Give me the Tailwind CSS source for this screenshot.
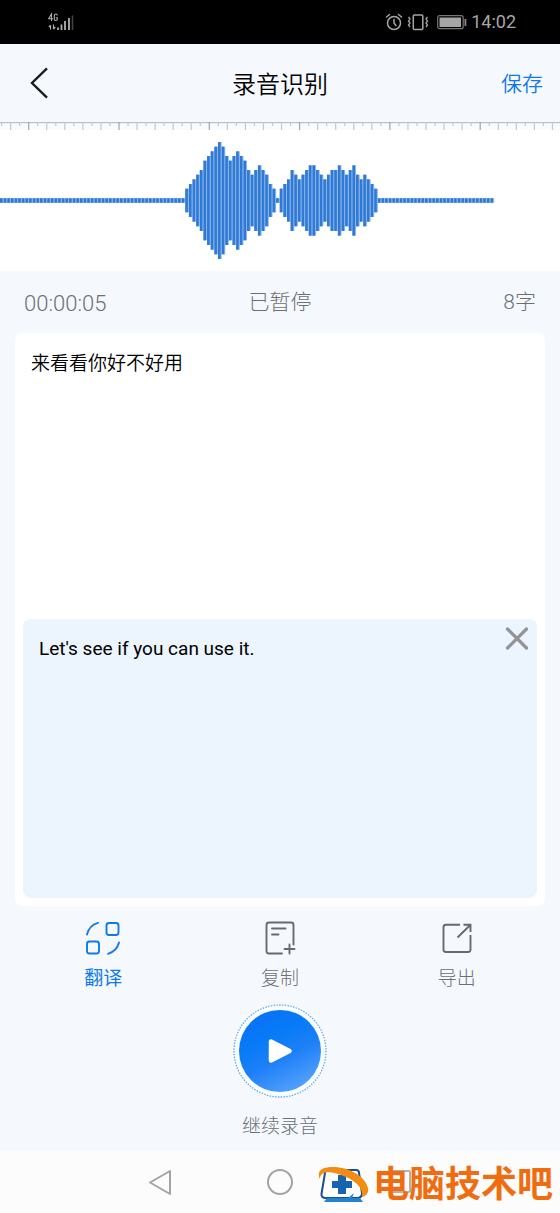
<!DOCTYPE html>
<html lang="zh-CN">
<head>
<meta charset="utf-8">
<meta name="viewport" content="width=device-width, initial-scale=1">
<title>录音识别</title>
<script src="https://cdn.jsdelivr.net/npm/@tailwindcss/browser@4"></script>
</head>
<body class="flex min-h-screen flex-col bg-[#f5f9fe] font-[Roboto,'Noto_Sans_CJK_SC',sans-serif] text-black">

<div class="flex h-11 items-center justify-between bg-black pr-11 pl-12 text-[#a6a6a6]">
  <svg class="h-5 w-7" viewBox="0 0 28 20" fill="none" stroke="#b0b0b0" aria-label="4G">
    <path d="M3.5 9V2L.6 6.7H5M9.3 3.6C9.300 1.500 6.300 1.500 6.300 3.600V6.900C6.300 9 9.300 9 9.300 6.900V5.700H7.800" stroke-width="1.100"/>
    <path d="M2.500 17.500V13.500M1 15L2.500 13.200M5.500 12.500V17M7.300 15L5.500 17.200" stroke-width="1.200"/>
    <path d="M10 18V15.500M13.500 18V12.500M17 18V9M21 18V6" stroke-width="1.800"/>
    <path d="M24.500 18V3.500" stroke="#444" stroke-width="1.500"/>
  </svg>
  <div class="flex items-center gap-1">
    <svg class="h-5 w-[18px]" viewBox="0 0 18 20" fill="none" stroke="currentColor" stroke-width="1.500" stroke-linecap="round">
      <circle cx="9" cy="11" r="6.500"/><path d="M9 7.500V11L11 13.500M1.500 5L4.500 2.500M16.500 5L13.500 2.500"/>
    </svg>
    <svg class="h-5 w-[22px]" viewBox="0 0 22 20" fill="none" stroke="currentColor" stroke-width="1.500">
      <rect x="6.300" y="3" width="9.500" height="14.500" rx="1"/>
      <path d="M1.500 5L3 7L1.500 9L3 11L1.500 13L3 15M20.500 5L19 7L20.500 9L19 11L20.500 13L19 15" stroke-width="1.300"/>
    </svg>
    <svg class="ml-1 h-5 w-[30px]" viewBox="0 0 30 20" fill="none">
      <rect x=".7" y="3.700" width="25.500" height="13" rx="2" stroke="#777" stroke-width="1.200"/>
      <rect x="2.500" y="5.500" width="21.500" height="9.500" fill="#a6a6a6"/>
      <rect x="27.500" y="7" width="1.800" height="7" fill="#888"/>
    </svg>
    <span class="text-lg">14:02</span>
  </div>
</div>

<header class="grid h-[78px] grid-cols-3 items-center px-[17px]">
  <button aria-label="返回" class="justify-self-start px-3">
    <svg class="h-8 w-5" viewBox="0 0 20 32" fill="none" stroke="#1c1c1c" stroke-width="2.400"><path d="M18 1.300L3 16L18 30.700"/></svg>
  </button>
  <h1 class="justify-self-center pt-1 text-2xl font-[350] whitespace-nowrap">录音识别</h1>
  <button class="justify-self-end pt-1 text-[21px] font-[350] text-[#0f7ae5]">保存</button>
</header>

<section class="flex flex-col bg-white" aria-label="波形">
  <svg id="ruler" class="h-2 w-full bg-[#f9fbfe]"></svg>
  <svg id="wave" class="h-[141px] w-full"></svg>
</section>

<div class="grid h-[62px] grid-cols-3 items-center px-6 pt-[2px] text-[21px] font-light text-[#6c7075]">
  <span class="text-[22px] text-[#6c7075]">00:00:05</span>
  <span class="text-center">已暂停</span>
  <span class="text-right">8字</span>
</div>

<main class="mx-[15px] flex flex-1 flex-col rounded-lg bg-white p-2">
  <textarea aria-label="识别文字" class="min-h-0 flex-1 resize-none px-2 pt-[9px] text-[19px] leading-7 font-[350] outline-none">来看看你好不好用</textarea>
  <div class="flex h-[279px] items-start rounded-lg bg-[#ecf4fe]">
    <textarea aria-label="译文" class="h-full flex-1 resize-none px-4 pt-4 text-[19px] leading-7 outline-none">Let's see if you can use it.</textarea>
    <button aria-label="关闭" class="p-2">
      <svg class="size-6" viewBox="0 0 24 24" stroke="#929496" stroke-width="3.200" stroke-linecap="round"><path d="M2.500 2L21.500 21M21.500 2L2.500 21"/></svg>
    </button>
  </div>
</main>

<div class="mx-[15px] grid grid-cols-3 pt-3 text-[19px] leading-7 font-light text-[#6c7075]">
  <button class="flex flex-col items-center gap-[7px] text-[#0f7ae5]">
    <svg class="h-10 w-9" viewBox="0 0 36 40" fill="none" stroke="currentColor" stroke-width="1.900" stroke-linecap="round">
      <rect x="21.500" y="5" width="12" height="12" rx="2.500"/><rect x="2" y="23.500" width="12" height="12" rx="2.500"/>
      <path d="M2 16.500C3.500 10 7 6.500 13 4.800M34 24.500C32.500 30.500 29 34 23 35.800"/>
    </svg>
    <span class="font-normal">翻译</span>
  </button>
  <button class="flex flex-col items-center gap-[7px]">
    <svg class="h-10 w-9" viewBox="0 0 36 40" fill="none" stroke="#66696d" stroke-width="1.900" stroke-linecap="round">
      <path d="M20 35.500H7Q4.500 35.500 4.500 33V7Q4.500 4.500 7 4.500H29Q31.500 4.500 31.500 7V26.500M10 10.500H23.500M10 16.500H16.500M27.500 26.500V35.500M22.500 31H32.500"/>
    </svg>
    <span>复制</span>
  </button>
  <button class="flex flex-col items-center gap-[7px]">
    <svg class="h-10 w-9" viewBox="0 0 36 40" fill="none" stroke="#66696d" stroke-width="1.900">
      <path d="M21 6.700H7Q4.500 6.700 4.500 9.200V31.500Q4.500 34 7 34H29Q31.500 34 31.500 31.500V17M24.500 6.700H31.500V14M31.500 6.700L18.500 19.500"/>
    </svg>
    <span>导出</span>
  </button>
</div>

<div class="flex justify-center pt-[10px] pb-[10px]">
  <button class="flex flex-col items-center gap-[14px] text-[19px] leading-7 font-light text-[#6c7075]">
    <svg class="size-24" viewBox="0 0 96 96">
      <defs><linearGradient id="blue" x1="0.200" y1="0" x2="0.700" y2="1"><stop offset="0" stop-color="#0a70f5"/><stop offset=".35" stop-color="#087bf7"/><stop offset=".6" stop-color="#1d80f8"/><stop offset="1" stop-color="#57a2fc"/></linearGradient></defs>
      <circle cx="48" cy="48" r="46" fill="#fafdff" stroke="#5ba6ee" stroke-width="1.300" stroke-dasharray="1.400 1.400"/>
      <circle cx="48" cy="48" r="41" fill="url(#blue)"/>
      <path d="M39 38.500V57.500L57.500 48Z" fill="#fff" stroke="#fff" stroke-width="4.500" stroke-linejoin="round"/>
    </svg>
    <span>继续录音</span>
  </button>
</div>

<nav class="relative grid h-[62px] grid-cols-[1fr_120px_120px_120px_1fr] items-center bg-[#fcfcfc]">
  <button aria-label="后退" class="col-start-2 justify-self-center">
    <svg class="size-7" viewBox="0 0 28 28" fill="none" stroke="#a3a3a3" stroke-width="2" stroke-linejoin="round"><path d="M24 3V26L4 14.500Z"/></svg>
  </button>
  <button aria-label="主页" class="justify-self-center">
    <svg class="size-7" viewBox="0 0 28 28" fill="none" stroke="#a3a3a3" stroke-width="2"><circle cx="14" cy="14" r="12"/></svg>
  </button>
  <button aria-label="最近任务" class="justify-self-center">
    <svg class="size-7" viewBox="0 0 28 28" fill="none" stroke="#b0b0b0" stroke-width="2"><rect x="4" y="3" width="20" height="21" rx="1"/></svg>
  </button>
  <div class="absolute top-2 right-[7px] flex items-center gap-1">
    <svg class="h-[42px] w-[52px]" viewBox="0 0 52 42" fill="none">
      <path d="M11 6H39Q42 6 42 9L45 29Q45 34 40 34H9Q4 34 4.500 30L8 9Q8 6 11 6Z" fill="#fff" stroke="#174f91" stroke-width="2"/>
      <path d="M21 11H29V17H35V24H29V30H21V24H15V17H21Z" fill="#1763ad"/>
      <path d="M10 34H31L37 29L35 34H43L46 38H7Z" fill="#2382c9"/>
      <path d="M3 15C-1 7 5 3 16 3C32 3 48 12 51 24C52 29 49 32 45 33C47 22 35 14 18 9C8 7 3 9 3 15Z" fill="#f28c13"/>
    </svg>
    <span class="text-4xl leading-[52px] font-bold whitespace-nowrap text-[#ef6c10]">电脑技术吧</span>
  </div>
</nav>

<script>
const NS = 'http://www.w3.org/2000/svg';
function bar(svg, x, y, w, h, fill) {
  const r = document.createElementNS(NS, 'rect');
  for (const [k, v] of Object.entries({ x, y, width: w, height: h, fill })) r.setAttribute(k, v);
  svg.appendChild(r);
}
const ruler = document.getElementById('ruler');
bar(ruler, 0, 0, '100%', 1.2, '#b9c0c8');
for (let i = 0; i < 140; i++) {
  const major = i % 10 === 3, long = i % 2 === 1;
  bar(ruler, 1 + i * 9.03, 0, 1.2, long ? 8 : 4, major ? '#a0a6ad' : '#c3c8ce');
}
// Loudness level of each sample; -1 is silence
const levels = [
  ...Array(51).fill(-1),
  0,1,2,3,4,6,7,8,9,10,9,7,6,7,8,7,6,4,3,4,5,4,3,1,0,
  -1,
  0,1,2,4,3,2,3,4,5,5,4,3,2,3,4,4,5,4,3,4,5,3,2,3,2,1,0,
  ...Array(32).fill(-1)
];
const wave = document.getElementById('wave'), step = 3.633;
levels.forEach((l, i) => {
  const half = l < 0 ? 2.3 : 11.8 + l * 4.67, x = i * step;
  bar(wave, x, 70.5 - half, step, half * 2, '#86b7f0');
  bar(wave, x, 70.5 - half, 2.6, half * 2, '#3179d3');
});
</script>
</body>
</html>
